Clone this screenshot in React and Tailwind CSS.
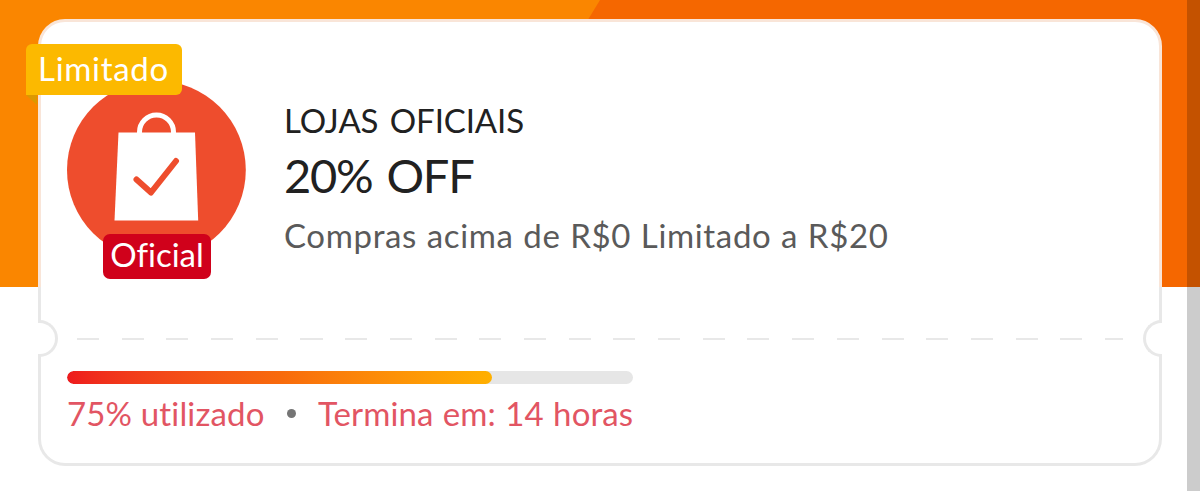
function Notch({ className }) {
  return (
    <div
      className={`absolute top-[301px] h-[37px] border-[3px] border-[#e8e8e8] bg-white ${className}`}
    />
  );
}

function StoreLogo() {
  return (
    <svg viewBox="0 0 180 180" className="size-[180px]">
      <circle cx="89.400" cy="90" r="89.400" fill="#ee4d2d" />
      <path d="M51.500 52.500h76.500l3.200 88H47.500z" fill="#fff" />
      <path d="M72.500 53v-1a17 17 0 0 1 34 0v1" fill="none" stroke="#fff" strokeWidth="5" />
      <path
        d="M69.500 99.500l14.500 13L109 81"
        fill="none"
        stroke="#ee4d2d"
        strokeWidth="6"
        strokeLinecap="round"
        strokeLinejoin="round"
      />
    </svg>
  );
}

function Voucher() {
  return (
    <div className="relative h-[447px] w-[1124px] rounded-[27px] bg-[linear-gradient(#f9e5d8_268px,#e8e8e8_268px)] p-[3px]">
      <div className="flex h-full flex-col rounded-[24px] bg-white px-[26px]">
        <div className="flex h-[316px] gap-[38px] pt-[58px]">
          <div className="relative size-[180px] shrink-0">
            <StoreLogo />
            <div className="absolute top-[154px] left-[36px] flex h-[45px] w-[108px] justify-center rounded-[7px] bg-[#d0011b] text-[33px] leading-[41px] text-white">
              Oficial
            </div>
          </div>
          <div className="flex flex-col whitespace-nowrap">
            <p className="mt-[20px] -ml-px text-[33px] leading-[40px] tracking-[-0.1px] text-[#212121] [word-spacing:3px]">
              LOJAS OFICIAIS
            </p>
            <h1 className="mt-[7px] -ml-px text-[47px] leading-[56px] tracking-[-1.2px] text-[#212121] [word-spacing:3px]">
              20% OFF
            </h1>
            <p className="mt-[12px] -ml-px text-[33px] leading-[40px] tracking-[0.65px] text-[#5a5a5a] [word-spacing:0.6px]">
              Compras acima de R$0 Limitado a R$20
            </p>
          </div>
        </div>

        <div className="mx-[10px] h-[2px] bg-[repeating-linear-gradient(90deg,#e8e8e8_0_22px,transparent_22px_44.7px)]" />

        <div className="mt-[31px] h-[13px] w-[566px] overflow-hidden rounded-full bg-[#e6e6e6]">
          <div className="h-full w-[75%] rounded-full bg-linear-to-r from-[#ee1a1d] via-[#f86a0c] to-[#ffb000]" />
        </div>
        <div className="mt-[9px] flex items-center text-[33px] leading-[40px] whitespace-nowrap text-[#e25563]">
          <span className="w-[220px] tracking-[0.15px]">75% utilizado</span>
          <span className="size-[9px] rounded-full bg-[#757575]" />
          <span className="ml-[22px] tracking-[0.1px] [word-spacing:0.8px]">Termina em: 14 horas</span>
        </div>
      </div>

      <Notch className="left-0 w-[20px] rounded-r-full border-l-0" />
      <Notch className="right-0 w-[19px] rounded-l-full border-r-0" />

      {/* ribbon hanging over the left edge */}
      <div className="absolute top-[25px] -left-[12px]">
        <div className="h-[51px] w-[156px] rounded-[6px] rounded-bl-none bg-[#fcb900] pl-[12px] text-[33px] leading-[49px] tracking-[0.7px] text-white">
          Limitado
        </div>
        <div className="h-[10px] w-[11px] bg-[#dc9800] [clip-path:polygon(0_0,100%_0,100%_100%)]" />
      </div>
    </div>
  );
}

export default function App() {
  return (
    <div className="relative h-[491px] w-[1200px] overflow-hidden bg-[linear-gradient(#fa8600,#fa8600)] bg-[length:100%_287px] bg-no-repeat font-['Lato',sans-serif] [font-variant-ligatures:none]">
      <div className="absolute top-0 right-0 h-[287px] w-[800px] bg-[#f56700] [clip-path:polygon(200px_0,100%_0,100%_100%,25px_100%)]" />
      <div className="relative pt-[19px] pl-[38px]">
        <Voucher />
      </div>
      <div className="absolute top-0 right-0 h-full w-[13px] bg-black/20" />
    </div>
  );
}
